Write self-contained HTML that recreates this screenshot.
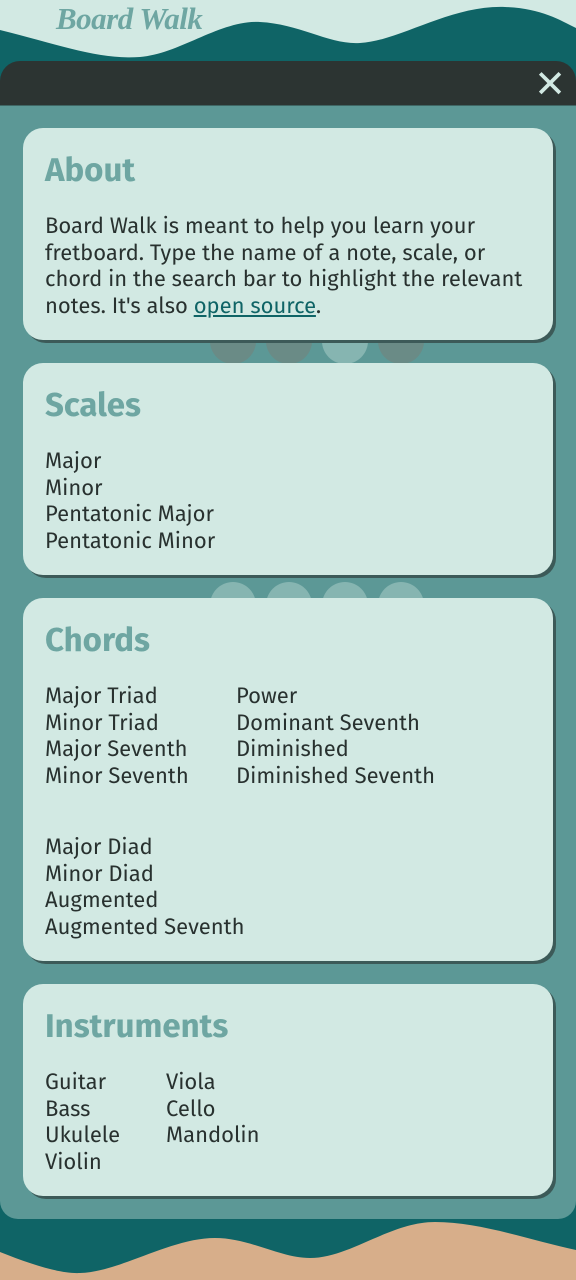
<!DOCTYPE html>
<html><head><meta charset="utf-8"><style>
*{margin:0;padding:0;box-sizing:border-box}
body{width:576px;height:1280px;position:relative;overflow:hidden;background:#d2e9e3;font-family:"Fira Sans","Liberation Sans",sans-serif;color:#28312f}
.logo{position:absolute;left:56px;top:1px;font-family:"Liberation Serif",serif;font-style:italic;font-weight:bold;font-size:31px;color:#6ea6a2;letter-spacing:-0.5px}
.bar{position:absolute;left:0;top:61px;width:576px;height:46px;background:#2c3432;border-radius:20px 20px 0 0}
.x{position:absolute;right:10px;top:64px;color:#d2e9e3;font-size:38px;font-weight:bold;font-family:"DejaVu Sans",sans-serif;line-height:40px}
.panel{position:absolute;left:0;top:105px;width:576px;height:1114px;background:#5c9896;border-radius:0 0 18px 18px;border-top:1px solid #3f6664}
.card{position:absolute;left:23px;width:530px;background:#d2e9e3;border-radius:20px;box-shadow:3px 3px 0 #3c5a58;padding:22px 22px}
h2{font-size:33px;color:#6ea6a2;font-weight:bold;line-height:40px;margin:0 0 23px}
p,li{font-size:22px;line-height:26.5px}
ul{list-style:none}
a{color:#0f6466}
.cols{display:flex}
.circ{position:absolute;width:46px;height:46px;border-radius:50%;background:#6a8b86}
</style></head><body>
<svg style="position:absolute;left:0;top:0" width="576" height="140">
<path d="M0 30 C60 45 100 60 140 57 C180 54 220 20 260 22 C300 24 330 45 360 43 C400 41 450 5 505 7 C540 8 560 20 576 28 L576 140 L0 140 Z" fill="#0f6466"/>
</svg>
<div class="logo">Board Walk</div>
<svg style="position:absolute;left:0;top:1200px" width="576" height="80">
<rect width="576" height="80" fill="#0f6466"/>
<path d="M0 52 C30 64 60 74 80 73 C120 72 170 38 215 38 C250 38 280 58 310 58 C350 58 390 22 435 22 C480 22 530 40 576 50 L576 80 L0 80 Z" fill="#d7ae8a"/>
</svg>
<div class="bar"></div>
<div class="x">✕</div>
<div class="panel"></div>
<div class="circ" style="left:210px;top:318px"></div>
<div class="circ" style="left:266px;top:318px"></div>
<div class="circ" style="left:322px;top:318px;background:#86b5b1"></div>
<div class="circ" style="left:378px;top:318px"></div>
<div class="circ" style="left:210px;top:582px;background:#86b5b1"></div>
<div class="circ" style="left:266px;top:582px;background:#86b5b1"></div>
<div class="circ" style="left:322px;top:582px;background:#86b5b1"></div>
<div class="circ" style="left:378px;top:582px;background:#86b5b1"></div>

<div class="card" style="top:128px;height:212px">
<h2>About</h2>
<p>Board Walk is meant to help you learn your fretboard. Type the name of a note, scale, or chord in the search bar to highlight the relevant notes. It's also <a href="#">open source</a>.</p>
</div>
<div class="card" style="top:363px;height:212px">
<h2>Scales</h2>
<ul><li>Major</li><li>Minor</li><li>Pentatonic Major</li><li>Pentatonic Minor</li></ul>
</div>
<div class="card" style="top:598px;height:363px">
<h2>Chords</h2>
<div class="cols"><ul style="width:191px"><li>Major Triad</li><li>Minor Triad</li><li>Major Seventh</li><li>Minor Seventh</li></ul>
<ul><li>Power</li><li>Dominant Seventh</li><li>Diminished</li><li>Diminished Seventh</li></ul></div>
<ul style="margin-top:45px"><li>Major Diad</li><li>Minor Diad</li><li>Augmented</li><li>Augmented Seventh</li></ul>
</div>
<div class="card" style="top:984px;height:212px">
<h2>Instruments</h2>
<div class="cols"><ul style="width:121px"><li>Guitar</li><li>Bass</li><li>Ukulele</li><li>Violin</li></ul>
<ul><li>Viola</li><li>Cello</li><li>Mandolin</li></ul></div>
</div>
</body></html>
